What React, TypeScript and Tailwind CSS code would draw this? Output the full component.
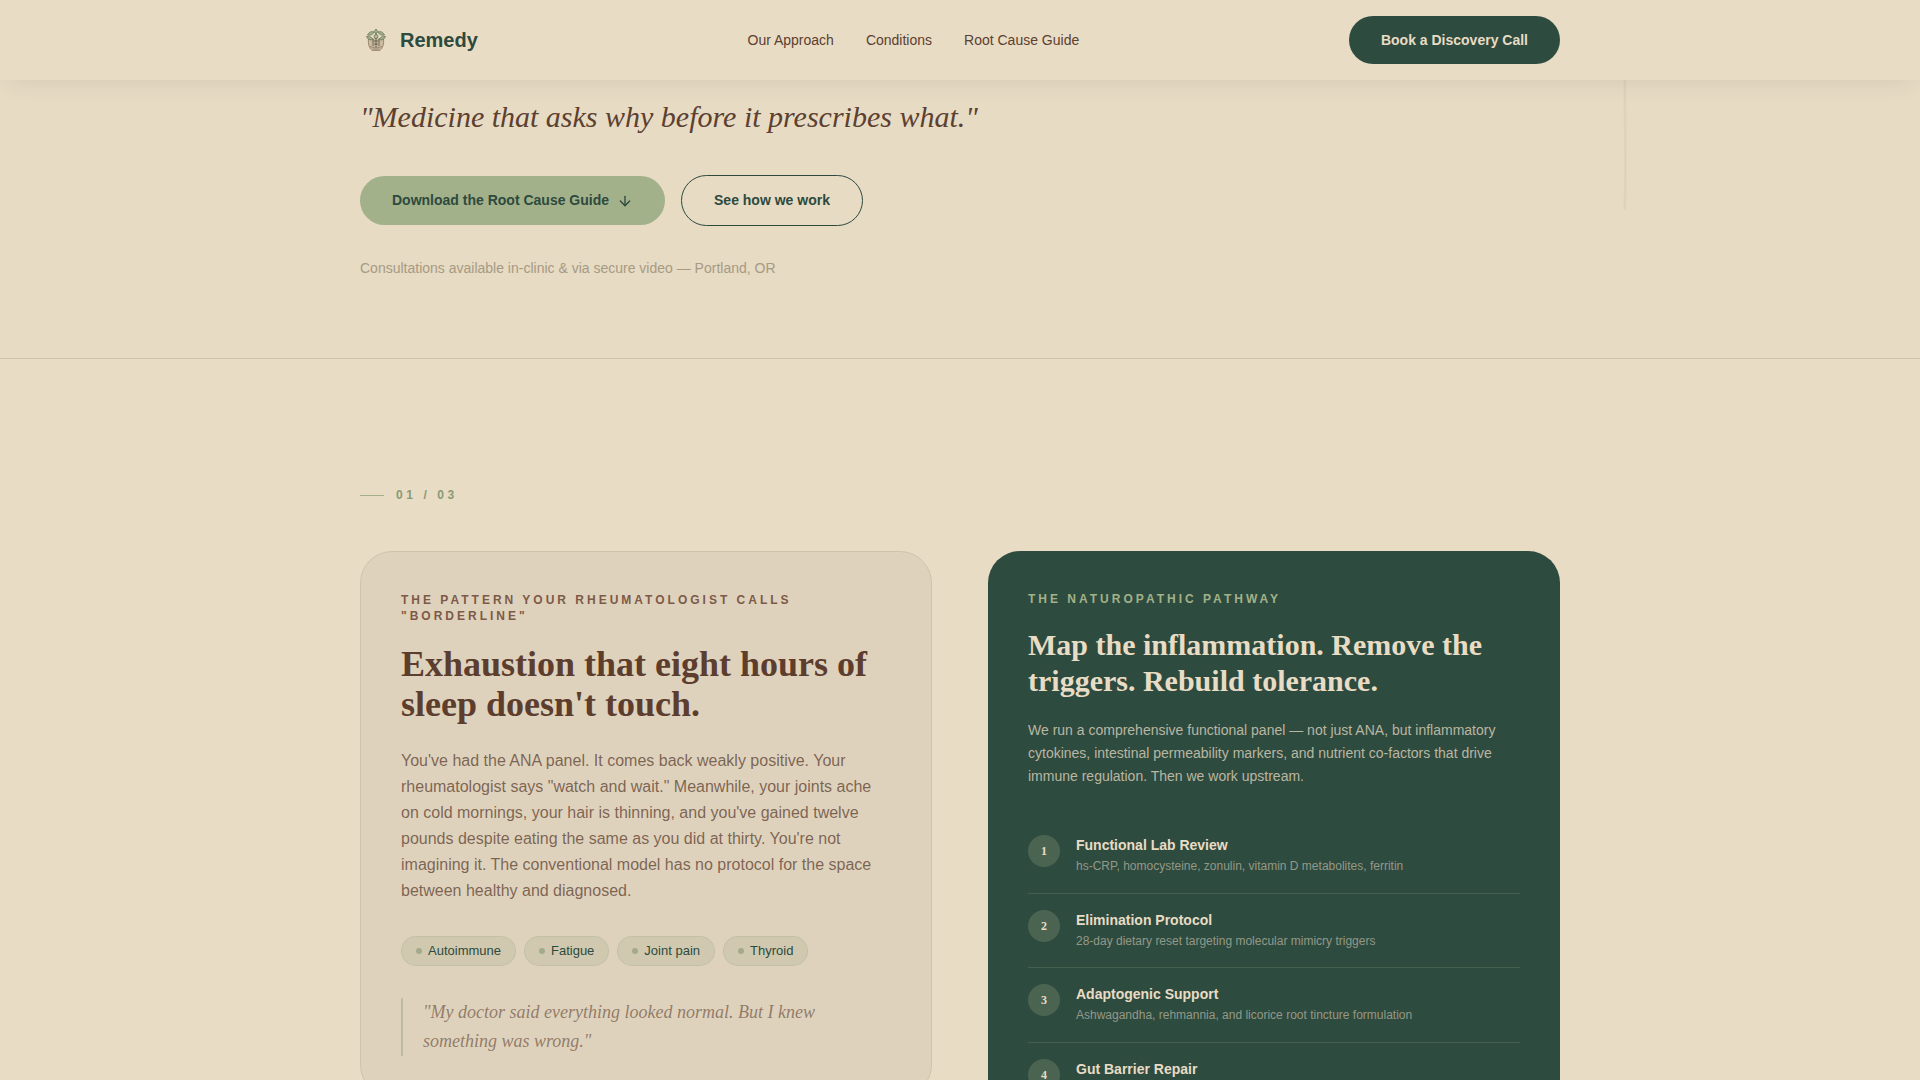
import { ArrowDown } from "lucide-react"

const navLinks = ["Our Approach", "Conditions", "Root Cause Guide"]

const tags = ["Autoimmune", "Fatigue", "Joint pain", "Thyroid"]

const steps = [
  { title: "Functional Lab Review", detail: "hs-CRP, homocysteine, zonulin, vitamin D metabolites, ferritin" },
  { title: "Elimination Protocol", detail: "28-day dietary reset targeting molecular mimicry triggers" },
  { title: "Adaptogenic Support", detail: "Ashwagandha, rehmannia, and licorice root tincture formulation" },
  { title: "Gut Barrier Repair", detail: "L-glutamine, zinc carnosine, and spore-based probiotics" },
]

function LogoMark() {
  return (
    <svg viewBox="0 0 32 32" className="size-8" fill="none" aria-hidden="true">
      <path d="M8 14c-.5 5 .5 10 4 12.500h8c3.500-2.500 4.500-7.500 4-12.500z" fill="#b9a58c" fillOpacity=".6" />
      <path d="M8.500 15c-.5 5 .5 9.500 4 11.500h7c3.500-2 4.500-6.500 4-11.500M10 22.500c4 1.500 8 1.500 12 0M12.500 25h7" stroke="#85735f" strokeWidth=".7" />
      <path d="M16 6v17M13 15v7M19 15v7" stroke="#5c6049" strokeWidth=".9" />
      <path d="M16 5l1.800 2.500L16 10 14.200 7.500zM14 8c-3-1-5 0-6.500 3 2.500.6 5 .2 6.500-3zM18 8c3-1 5 0 6.500 3-2.500.6-5 .2-6.500-3zM6.500 12.500c2-.5 5.500.5 6.500 3-2.500 1-5.500 0-6.500-3zM25.500 12.500c-2-.5-5.500.5-6.500 3 2.500 1 5.500 0 6.500-3z" fill="#a3ad8a" stroke="#5f6f52" strokeWidth=".7" />
      <circle cx="16" cy="12.500" r="2" fill="#b5b598" stroke="#5f6f52" strokeWidth=".7" />
      <path d="M13.500 17h5M14 20h4" stroke="#5f4f41" strokeWidth=".8" />
    </svg>
  )
}

function Header() {
  return (
    <header className="relative z-20 bg-[#e8dcc5] shadow-[0_8px_24px_-8px_rgba(74,60,60,0.12)]">
      <div className="mx-auto flex h-20 max-w-[1200px] items-center justify-between">
        <a href="#" className="flex items-center gap-2 text-xl font-bold text-[#2d4a3e]">
          <LogoMark />
          Remedy
        </a>
        <nav className="flex gap-8 text-sm text-[#5c4030]">
          {navLinks.map((link) => (
            <a key={link} href="#">{link}</a>
          ))}
        </nav>
        <button type="button" className="h-12 rounded-full bg-[#2e4b3f] px-8 text-sm font-bold text-[#e8dcc5]">
          Book a Discovery Call
        </button>
      </div>
    </header>
  )
}

function Hero() {
  return (
    <section className="relative border-b border-[#cfc4ab] bg-[#e7dbc4]">
      <div className="mx-auto max-w-[1200px] pt-4 pb-20">
        <p className="font-['Liberation_Serif',serif] text-3xl leading-[42px] text-[#5c4030] italic">
          "Medicine that asks why before it prescribes what."
        </p>
        <div className="mt-[37px] flex items-center gap-4 text-sm font-bold text-[#2d4a3e]">
          <button type="button" className="flex items-center gap-2 rounded-full bg-[#a3b18a] px-8 py-4 leading-[17px]">
            Download the Root Cause Guide
            <ArrowDown className="size-4" />
          </button>
          <button type="button" className="rounded-full border border-[#2d4a3e] px-8 py-4 leading-[17px]">
            See how we work
          </button>
        </div>
        <p className="mt-8 text-sm text-[#a69a82]">
          Consultations available in-clinic &amp; via secure video — Portland, OR
        </p>
      </div>
      {/* botanical stem hanging behind the header */}
      <svg className="absolute top-0 right-[15%] h-[132px] w-16 text-[#5c4030]" viewBox="0 0 64 132" fill="none" aria-hidden="true">
        <path d="M57 0c0 40 1 80 0 130" stroke="currentColor" strokeWidth="3" strokeOpacity=".03" />
        <path d="M56.500 0c0 40 2 80 0 130" stroke="currentColor" strokeOpacity=".04" />
      </svg>
    </section>
  )
}

function SymptomCard() {
  return (
    <article className="rounded-[32px] border border-[#cfc3ac] bg-[#dfd2bc] p-10">
      <p className="text-xs font-bold tracking-[0.25em] text-[#7d5a48] uppercase">
        The pattern your rheumatologist calls "borderline"
      </p>
      <h2 className="mt-5 font-['Liberation_Serif',serif] text-4xl font-bold text-[#5c3d2e]">
        Exhaustion that eight hours of sleep doesn't touch.
      </h2>
      <p className="mt-6 leading-relaxed text-[#5c4030]/75">
        You've had the ANA panel. It comes back weakly positive. Your rheumatologist says "watch and
        wait." Meanwhile, your joints ache on cold mornings, your hair is thinning, and you've gained
        twelve pounds despite eating the same as you did at thirty. You're not imagining it. The
        conventional model has no protocol for the space between healthy and diagnosed.
      </p>
      <ul className="mt-8 flex flex-wrap gap-2">
        {tags.map((tag) => (
          <li
            key={tag}
            className="flex items-center gap-1.5 rounded-full border border-[#a3b18a]/30 bg-[#a3b18a]/25 px-3.5 py-1 text-[13px] leading-5 text-[#2d4a3e]"
          >
            <span className="size-1.5 rounded-full bg-[#a3ab8a]" />
            {tag}
          </li>
        ))}
      </ul>
      <blockquote className="mt-8 border-l-2 border-[#a3b18a]/60 pl-5 font-['Liberation_Serif',serif] text-lg leading-[29px] text-[#5c4030]/60 italic">
        "My doctor said everything looked normal. But I knew something was wrong."
      </blockquote>
    </article>
  )
}

function PathwayCard() {
  return (
    <article className="rounded-[32px] bg-[#2e4b3f] p-10 text-[#e8dcc5]">
      <p className="text-xs font-bold tracking-[0.25em] text-[#a3b18a] uppercase">The naturopathic pathway</p>
      <h3 className="mt-5 font-['Liberation_Serif',serif] text-3xl font-bold">
        Map the inflammation. Remove the triggers. Rebuild tolerance.
      </h3>
      <p className="mt-5 text-sm leading-relaxed text-[#e8dcc5]/75">
        We run a comprehensive functional panel — not just ANA, but inflammatory cytokines, intestinal
        permeability markers, and nutrient co-factors that drive immune regulation. Then we work upstream.
      </p>
      <ol className="mt-8 divide-y divide-[#a3b18a]/20">
        {steps.map((step, i) => (
          <li key={step.title} className="flex gap-4 py-4">
            <span className="flex size-8 shrink-0 items-center justify-center rounded-full bg-[#a3b18a]/25 font-['Liberation_Serif',serif] text-xs font-bold">
              {i + 1}
            </span>
            <div>
              <h4 className="text-sm font-bold">{step.title}</h4>
              <p className="mt-0.5 text-xs leading-relaxed text-[#e8dcc5]/55">{step.detail}</p>
            </div>
          </li>
        ))}
      </ol>
    </article>
  )
}

export default function App() {
  return (
    <div className="h-screen overflow-hidden bg-[#e8dcc5] font-['Liberation_Sans',Arial,sans-serif]">
      <Header />
      <main>
        <Hero />
        <section className="mx-auto max-w-[1200px] pt-32 pb-32">
          <div className="flex items-center gap-3 text-xs font-bold tracking-[0.3em] text-[#8a9a76]">
            <span className="h-px w-6 bg-[#a3b18a]" />
            01 / 03
          </div>
          <div className="mt-12 grid grid-cols-2 items-start gap-14">
            <SymptomCard />
            <PathwayCard />
          </div>
        </section>
      </main>
    </div>
  )
}
